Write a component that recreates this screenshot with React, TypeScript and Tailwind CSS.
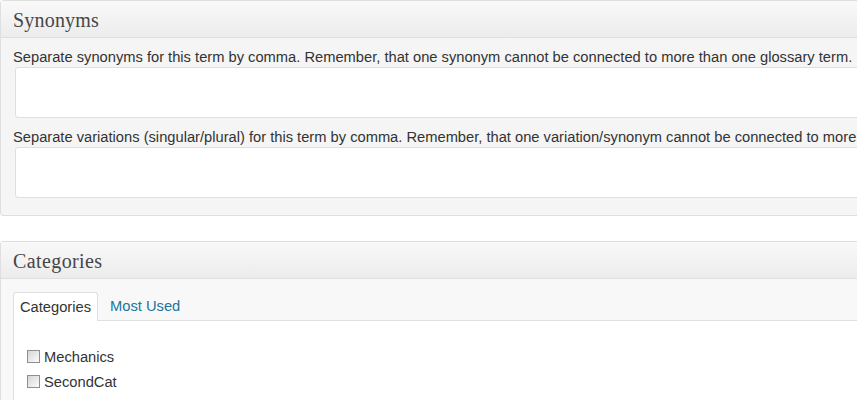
import React from "react";

function Checkbox() {
  return (
    <span className="inline-block w-[13px] h-[13px] border border-[#8e8f8f] bg-linear-to-br from-[#d6d6d6] to-[#fbfbfb] shrink-0" />
  );
}

export default function App() {
  return (
    <div className="w-[857px] h-[400px] overflow-hidden bg-white font-['Liberation_Sans',Arial,sans-serif] text-[14.7px] text-[#333]">
      <div className="w-[1000px]">
        {/* Synonyms panel */}
        <div className="border border-[#dfdfdf] rounded-[3px] bg-[#f5f5f5]">
          <div className="h-[37px] bg-linear-to-b from-[#f9f9f9] to-[#ececec] border-b border-[#dfdfdf] px-[12px] flex items-center">
            <h3 className="font-['Liberation_Serif','Times_New_Roman',serif] text-[20px] tracking-[0.2px] text-[#464646] leading-[36px] pt-[1px]">
              Synonyms
            </h3>
          </div>
          <div className="pt-[10px] pb-[17px] px-[12px]">
            <div className="leading-[18px] h-[18px] whitespace-nowrap">
              Separate synonyms for this term by comma. Remember, that one synonym cannot be connected to more than one glossary term.
            </div>
            <div className="mt-[1px] ml-[2px] h-[51px] w-[960px] border border-[#dfdfdf] rounded-[3px] bg-white" />
            <div className="mt-[10px] leading-[18px] h-[18px] whitespace-nowrap">
              Separate variations (singular/plural) for this term by comma. Remember, that one variation/synonym cannot be connected to more than one glossary term.
            </div>
            <div className="mt-[1px] ml-[2px] h-[51px] w-[960px] border border-[#dfdfdf] rounded-[3px] bg-white" />
          </div>
        </div>

        {/* Categories panel */}
        <div className="mt-[25px] border border-[#dfdfdf] rounded-[3px] bg-[#f7f7f7]">
          <div className="h-[37px] bg-linear-to-b from-[#f9f9f9] to-[#ececec] border-b border-[#dfdfdf] px-[12px] flex items-center">
            <h3 className="font-['Liberation_Serif','Times_New_Roman',serif] text-[20px] tracking-[0.4px] text-[#464646] leading-[36px] pt-[1px]">
              Categories
            </h3>
          </div>
          <div className="pt-[12px] px-[12px] bg-[#f8f8f8]">
            <div className="flex items-end">
              <div className="h-[29px] px-[6px] border border-b-0 border-[#dfdfdf] rounded-t-[3px] bg-white flex items-center relative top-[1px]">
                Categories
              </div>
              <div className="h-[28px] px-[12px] flex items-center text-[#21759b]">Most Used</div>
            </div>
            <div className="border border-[#dfdfdf] bg-white h-[100px] pt-[29px] pl-[13px]">
              <div className="flex items-center gap-[4px] h-[13px]">
                <Checkbox />
                <span className="leading-[18px]">Mechanics</span>
              </div>
              <div className="flex items-center gap-[4px] h-[13px] mt-[12px]">
                <Checkbox />
                <span className="leading-[18px]">SecondCat</span>
              </div>
            </div>
          </div>
        </div>
      </div>
    </div>
  );
}
